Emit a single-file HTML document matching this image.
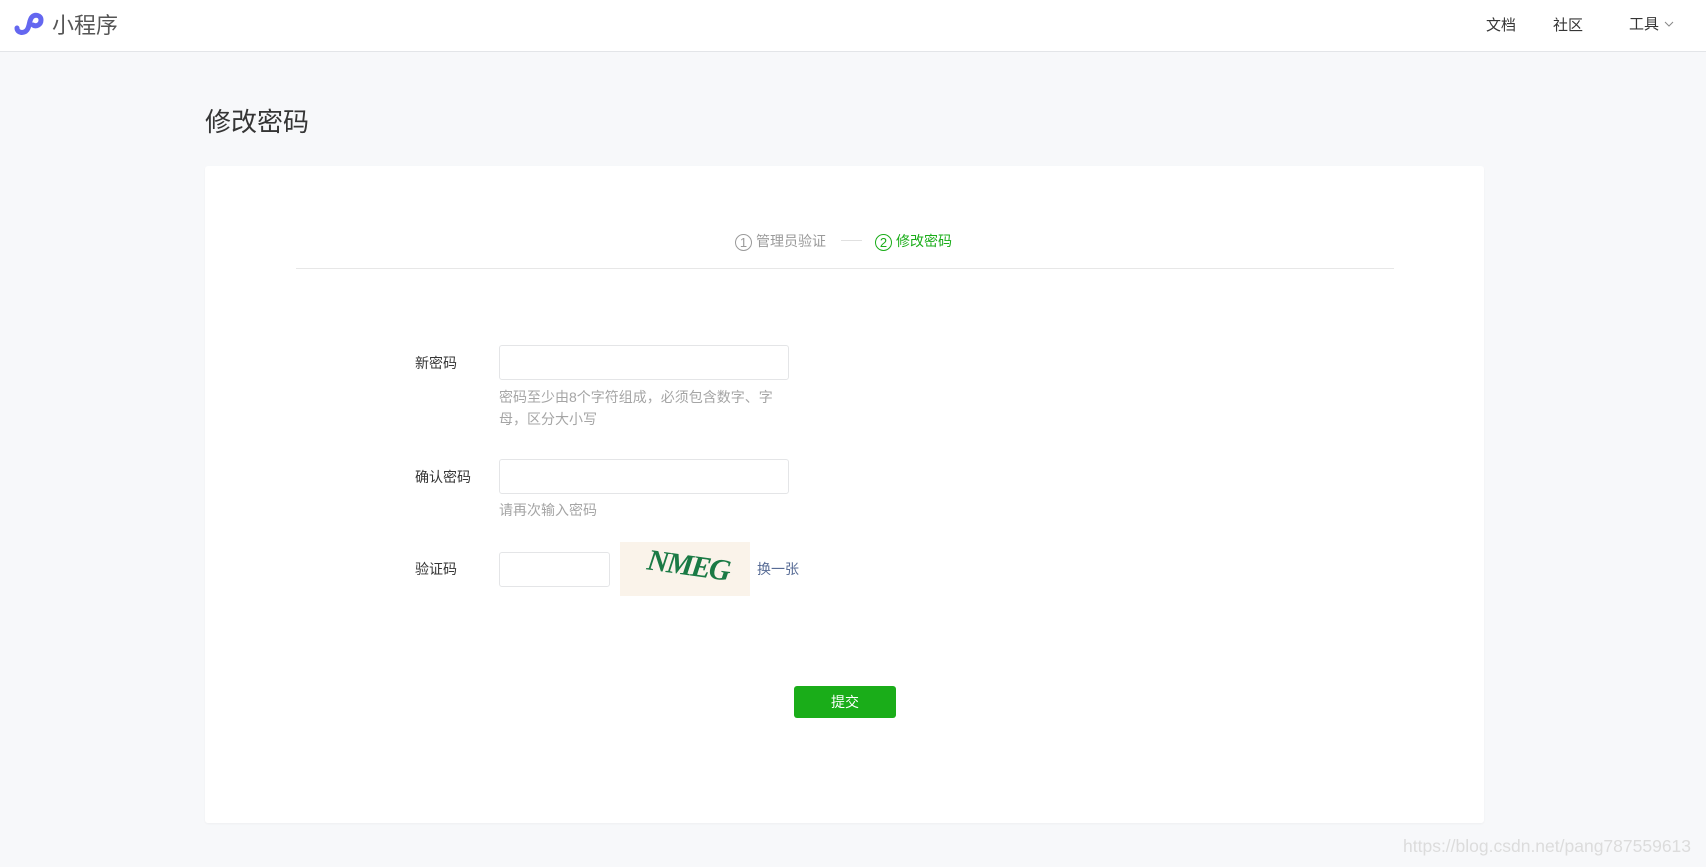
<!DOCTYPE html>
<html><head><meta charset="utf-8"><style>
*{margin:0;padding:0;box-sizing:border-box}
body{width:1706px;height:867px;background:#f7f8fa;font-family:"Liberation Sans","Noto Sans CJK SC",sans-serif;position:relative;overflow:hidden;color:#353535}
.a{position:absolute;white-space:nowrap}
.hdr{position:absolute;left:0;top:0;width:1706px;height:52px;background:#fff;border-bottom:1px solid #e3e5e8}
.card{position:absolute;left:205px;top:166px;width:1279px;height:657px;background:#fff;border-radius:3px;box-shadow:0 1px 2px rgba(0,0,0,.04)}
.inp{position:absolute;border:1px solid #e4e5e7;border-radius:3px;background:#fff}
.lbl{font-size:14px;color:#353535}
.hint{font-size:14px;color:#a5a5a5}
.circ{display:inline-block;width:17px;height:17px;border:1px solid;border-radius:50%;font-size:13px;line-height:15px;text-align:center;vertical-align:-1px;margin-right:4px}
</style></head><body>
<div class="hdr"></div>
<svg class="a" style="left:12px;top:8px" width="34" height="30" viewBox="0 0 34 30"><path d="M5 20c0 5 7 6 10 2 3-4 2-10 5-13 3-3 9-2 9 3s-5 7-8 5" fill="none" stroke="#6467f0" stroke-width="5" stroke-linecap="round"/></svg>
<div class="a" style="left:52px;top:8px;font-size:22px;color:#555">小程序</div>
<div class="a" style="left:1486px;top:14px;font-size:15px;color:#353535">文档</div>
<div class="a" style="left:1553px;top:14px;font-size:15px;color:#353535">社区</div>
<div class="a" style="left:1629px;top:13px;font-size:15px;color:#353535">工具</div>
<svg class="a" style="left:1664px;top:20px" width="10" height="8"><path d="M1 2l4 4 4-4" fill="none" stroke="#888" stroke-width="1"/></svg>
<div class="a" style="left:205px;top:102px;font-size:26px;color:#353535">修改密码</div>
<div class="card"></div>
<div class="a" style="left:735px;top:231px;font-size:14px;color:#9a9a9a"><span class="circ">1</span>管理员验证</div>
<div class="a" style="left:841px;top:240px;width:21px;height:1px;background:#e0e0e0"></div>
<div class="a" style="left:875px;top:231px;font-size:14px;color:#1aad19"><span class="circ">2</span>修改密码</div>
<div class="a" style="left:296px;top:268px;width:1098px;height:1px;background:#e7e7e7"></div>
<div class="a lbl" style="left:415px;top:353px">新密码</div>
<div class="inp" style="left:499px;top:345px;width:290px;height:35px"></div>
<div class="a hint" style="left:499px;top:386px;line-height:22px">密码至少由8个字符组成，必须包含数字、字<br>母，区分大小写</div>
<div class="a lbl" style="left:415px;top:467px">确认密码</div>
<div class="inp" style="left:499px;top:459px;width:290px;height:35px"></div>
<div class="a hint" style="left:499px;top:500px">请再次输入密码</div>
<div class="a lbl" style="left:415px;top:559px">验证码</div>
<div class="inp" style="left:499px;top:552px;width:111px;height:35px"></div>
<div class="a" style="left:620px;top:542px;width:130px;height:54px;background:#faf3ea;overflow:hidden"><div style="position:absolute;left:27px;top:7px;font:bold italic 30px 'Liberation Serif',serif;color:#1a7a45;transform:rotate(8deg);letter-spacing:-2px">NMEG</div></div>
<div class="a" style="left:757px;top:559px;font-size:14px;color:#576b95">换一张</div>
<div class="a" style="left:794px;top:686px;width:102px;height:32px;background:#1aad19;border-radius:3px;color:#fff;font-size:14px;text-align:center;line-height:32px">提交</div>
<div class="a" style="left:1403px;top:836px;font-size:17.5px;color:#dcdcdc">https://blog.csdn.net/pang787559613</div>
</body></html>
